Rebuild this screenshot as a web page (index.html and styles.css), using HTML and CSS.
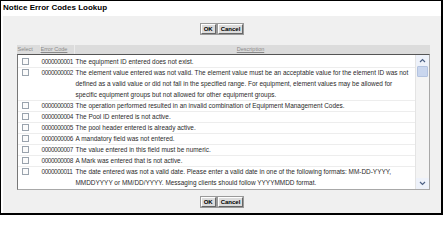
FILE: index.html
```html
<!DOCTYPE html>
<html>
<head>
<meta charset="utf-8">
<link rel="stylesheet" href="styles.css">
</head>
<body>
<div class="frame">
  <div class="title">Notice Error Codes Lookup</div>
  <div class="panel">
    <div class="buttons top">
      <button class="btn">OK</button>
      <button class="btn">Cancel</button>
    </div>
    <div class="grid">
      <div class="head">
        <div class="c-sel">Select</div>
        <div class="c-code"><span class="lnk">Error Code</span></div>
        <div class="c-desc center"><span class="lnk">Description</span></div>
      </div>
      <div class="box">
        <div class="rows">
          <div class="row"><div class="c-sel"><span class="cb"></span></div><div class="c-code">0000000001</div><div class="c-desc">The equipment ID entered does not exist.</div></div>
          <div class="row"><div class="c-sel"><span class="cb"></span></div><div class="c-code">0000000002</div><div class="c-desc">The element value entered was not valid. The element value must be an acceptable value for the element ID was not defined as a valid value or did not fall in the specified range. For equipment, element values may be allowed for specific equipment groups but not allowed for other equipment groups.</div></div>
          <div class="row"><div class="c-sel"><span class="cb"></span></div><div class="c-code">0000000003</div><div class="c-desc">The operation performed resulted in an invalid combination of Equipment Management Codes.</div></div>
          <div class="row"><div class="c-sel"><span class="cb"></span></div><div class="c-code">0000000004</div><div class="c-desc">The Pool ID entered is not active.</div></div>
          <div class="row"><div class="c-sel"><span class="cb"></span></div><div class="c-code">0000000005</div><div class="c-desc">The pool header entered is already active.</div></div>
          <div class="row"><div class="c-sel"><span class="cb"></span></div><div class="c-code">0000000006</div><div class="c-desc">A mandatory field was not entered.</div></div>
          <div class="row"><div class="c-sel"><span class="cb"></span></div><div class="c-code">0000000007</div><div class="c-desc">The value entered in this field must be numeric.</div></div>
          <div class="row"><div class="c-sel"><span class="cb"></span></div><div class="c-code">0000000008</div><div class="c-desc">A Mark was entered that is not active.</div></div>
          <div class="row last"><div class="c-sel"><span class="cb"></span></div><div class="c-code">0000000011</div><div class="c-desc">The date entered was not a valid date. Please enter a valid date in one of the following formats: MM-DD-YYYY, MMDDYYYY or MM/DD/YYYY. Messaging clients should follow YYYYMMDD format.</div></div>
        </div>
        <div class="sbar">
          <div class="arrow"><svg width="7" height="5" viewBox="0 0 7 5"><path d="M1 4 L3.5 1.5 L6 4" fill="none" stroke="#4d6185" stroke-width="1.2"/></svg></div>
          <div class="thumb"></div>
          <div class="track"></div>
          <div class="arrow"><svg width="7" height="5" viewBox="0 0 7 5"><path d="M1 1 L3.5 3.5 L6 1" fill="none" stroke="#4d6185" stroke-width="1.2"/></svg></div>
        </div>
      </div>
    </div>
    <div class="buttons bottom">
      <button class="btn">OK</button>
      <button class="btn">Cancel</button>
    </div>
  </div>
</div>
</body>
</html>
```

FILE: styles.css
```css
html, body {
  margin: 0;
  padding: 0;
  background: #ffffff;
}
.frame {
  width: 443px;
  height: 215px;
  box-sizing: border-box;
  border-style: solid;
  border-color: #000;
  border-width: 1px 2px 2px 1px;
  background: #fff;
  display: flex;
  flex-direction: column;
  font-family: "Liberation Sans", Arial, sans-serif;
}
.title {
  height: 15px;
  box-sizing: border-box;
  padding: 2px 0 0 2px;
  font-size: 8px;
  font-weight: bold;
  line-height: 10px;
  color: #000;
}
.panel {
  flex: 1;
  margin-left: 2px;
  background: #f0f0f0;
  display: flex;
  flex-direction: column;
  align-items: center;
}
.buttons {
  display: flex;
  gap: 2px;
  justify-content: center;
}
.buttons.top {
  margin-top: 8px;
}
.buttons.bottom {
  margin-top: 7px;
}
.btn {
  font-family: "Liberation Sans", Arial, sans-serif;
  font-size: 6px;
  font-weight: bold;
  line-height: 7px;
  height: 10px;
  padding: 0 2px;
  margin: 0;
  color: #000;
  background: #dcdcdc;
  border: 1px solid;
  border-color: #ffffff #666 #666 #ffffff;
  box-shadow: 0 0 0 1px #9a9a9a;
}
.grid {
  margin-top: 11px;
  width: 413px;
  margin-left: 2px;
}
.head {
  display: flex;
  height: 9px;
  background: #dcdcdc;
  font-size: 5.5px;
  line-height: 9px;
  color: #8a8a8a;
}
.head > div {
  border-right: 1px solid #ececec;
  box-sizing: border-box;
}
.head .c-sel {
  padding-left: 1px;
}
.head .c-code {
  padding-left: 0;
}
.head .c-desc {
  border-right: none;
}
.lnk {
  text-decoration: underline;
}
.center {
  text-align: center;
}
.c-sel {
  width: 24px;
  flex: none;
  box-sizing: border-box;
}
.c-code {
  width: 34px;
  flex: none;
  box-sizing: border-box;
}
.c-desc {
  flex: 1;
  padding-right: 3px;
}
.box {
  display: flex;
  height: 136px;
  box-sizing: border-box;
  border: 1px solid #a8a8a8;
  border-top: 1px solid #555;
  border-left: 1px solid #777;
  background: #fff;
  overflow: hidden;
}
.rows {
  flex: 1;
  padding-top: 1px;
  overflow: hidden;
}
.row {
  display: flex;
  font-size: 6.45px;
  line-height: 11px;
  color: #2a2a2a;
  border-bottom: 1px solid #ededed;
  margin-bottom: -1px;
}
.row.last {
  border-bottom: none;
}
.row .c-sel {
  padding-left: 4px;
}
.row .c-code {
  letter-spacing: -0.45px;
  color: #333;
}
.cb {
  display: inline-block;
  width: 5px;
  height: 5px;
  border: 1px solid #9aa3ad;
  background: #fbfbfb;
  vertical-align: -1px;
}
.sbar {
  width: 13px;
  flex: none;
  display: flex;
  flex-direction: column;
  background: #f4f4f4;
  border-left: 1px solid #e4e4e4;
}
.arrow {
  height: 11px;
  display: flex;
  align-items: center;
  justify-content: center;
  background: #eef2fa;
}
.thumb {
  height: 9px;
  margin: 0 1px;
  background: #c9d6ee;
  border: 1px solid #b3c3e0;
  border-radius: 1px;
}
.track {
  flex: 1;
}
```
